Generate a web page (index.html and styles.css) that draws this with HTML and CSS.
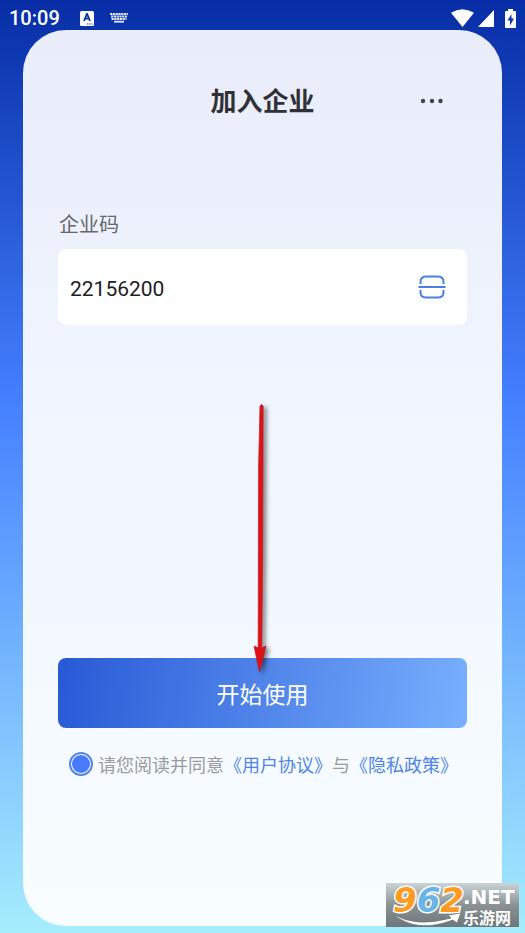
FILE: index.html
```html
<!DOCTYPE html>
<html lang="zh-CN">
<head>
<meta charset="utf-8">
<meta name="viewport" content="width=device-width, initial-scale=1">
<title>加入企业</title>
<link rel="stylesheet" href="styles.css">
</head>
<body>
<div class="status">
  <time class="clock">10:09</time>
  <svg class="ime" width="14" height="15" viewBox="0 0 14 15"><rect width="14" height="15" rx="1.5" fill="#fff"/><path d="M4 10 6.900 3h.2L10 10M5.200 7.700h3.600" fill="none" stroke="#0a34a8" stroke-width="1.8"/><path d="M7 13h1.400M9.300 13h1.200M11.400 13h1.200" stroke="#0a34a8" stroke-width="1.2"/></svg>
  <svg class="keyboard" width="18" height="10" viewBox="0 0 18 10"><path d="M0 1h18M1 3.500h16M1.500 6h15" fill="none" stroke="#e2e9ff" stroke-width="2" stroke-dasharray="2.200 .6"/><path d="M4 8.700h10" stroke="#e2e9ff" stroke-width="1.8"/></svg>
  <span class="signals">
    <svg width="23" height="18" viewBox="0 0 23 18"><path d="M0 3.700Q11.500-3.400 23 3.700L11.500 18Z" fill="#fff"/></svg>
    <svg width="16" height="17" viewBox="0 0 16 17"><path d="M16 0v17H0Z" fill="#fff"/></svg>
    <svg class="battery" width="11" height="19" viewBox="0 0 11 19"><path d="M3 0h5v2h2q1 0 1 1v15q0 1-1 1H1q-1 0-1-1V3q0-1 1-1h2Z" fill="#fff"/><path d="M6.500 5 2.500 11.500h2.500V16.500L9 9.500H6.500Z" fill="#0b36ae"/></svg>
  </span>
</div>
<main class="card">
  <header class="top">
    <h1>加入企业</h1>
    <button class="more" type="button" aria-label="更多"><svg width="24" height="6" viewBox="0 0 24 6" fill="#414448"><circle cx="3" cy="3" r="2.200"/><circle cx="12" cy="3" r="2.200"/><circle cx="20.500" cy="3" r="2.200"/></svg></button>
  </header>
  <form class="form">
    <label class="label" for="code">企业码</label>
    <div class="field">
      <input id="code" class="code" type="text" inputmode="numeric" value="22156200">
      <button class="scan" type="button" aria-label="扫码"><svg width="28" height="24" viewBox="0 0 28 24" fill="none" stroke="#4781e8" stroke-width="2"><path d="M2.500 9V7Q2.500 1.500 8 1.500h12Q25.500 1.500 25.500 7v2M2.500 15v2q0 5.500 5.500 5.500h12q5.500 0 5.500-5.500v-2M.5 12h27"/></svg></button>
    </div>
    <button class="start" type="button">开始使用</button>
    <div class="terms">
      <input id="agree" class="agree" type="radio" checked>
      <p><label for="agree">请您阅读并同意</label><a href="#terms">《用户协议》</a>与<a href="#privacy">《隐私政策》</a></p>
    </div>
  </form>
  <svg class="arrow" width="30" height="276" viewBox="0 0 30 276"><path d="M13 4Q14.500 1 16.200 4L15.700 155 14.800 246 19 244 12.500 270 7 244 11.200 246 11.600 65Z" fill="#e01116" stroke="#b91b20" stroke-width=".7"/></svg>
</main>
<div class="mark" aria-hidden="true">
  <span class="digits">9<b>6</b>2</span><span class="net">.NET</span><span class="site">乐游网</span>
  <svg class="swoosh" width="70" height="14" viewBox="0 0 70 14"><path d="M1 1Q24 15 59 5L56 2 69 0 65 10 61 7Q24 21 1 1Z" fill="#fff" stroke="#70777a" stroke-width=".8"/></svg>
</div>
</body>
</html>
```
FILE: styles.css
```css
* {
  box-sizing: border-box;
}

body {
  position: relative;
  display: flex;
  flex-direction: column;
  min-height: 100vh;
  margin: 0;
  background: linear-gradient(#062da6 0%, #4580ff 43%, #a5edfd 100%);
  font-family: Roboto, "Noto Sans CJK SC", sans-serif;
}

button {
  padding: 0;
  border: 0;
  background: none;
  font: inherit;
}

svg {
  display: block;
}

.status {
  display: flex;
  align-items: center;
  height: 30px;
  padding: 6px 9px 0;
  color: #fff;
}

.clock {
  font-size: 20px;
  font-weight: 500;
  line-height: 24px;
}

.ime {
  margin-left: 20px;
}

.keyboard {
  margin-left: 16px;
}

.signals {
  display: flex;
  align-items: center;
  gap: 4px;
  margin-left: auto;
}

.battery {
  margin-left: 7px;
}

.card {
  position: relative;
  display: flex;
  flex: 1;
  flex-direction: column;
  margin: 0 23px 7px;
  padding: 50px 35px 150px;
  border-radius: 43px;
  background: linear-gradient(#e9ecf9 0%, #f0f5ff 40%, #f8fdff 100%);
}

.top {
  display: grid;
  grid-template-columns: 1fr auto 1fr;
  align-items: center;
  height: 40px;
}

h1 {
  grid-column: 2;
  margin: 0;
  padding-top: 2px;
  color: #303136;
  font-size: 26px;
  font-weight: 700;
  line-height: 40px;
}

.more {
  justify-self: end;
  padding: 12px 23px 12px 12px;
}

.form {
  display: flex;
  flex: 1;
  flex-direction: column;
  margin-top: 89px;
}

.label {
  padding-left: 1px;
  color: #66686c;
  font-size: 20px;
  line-height: 32px;
}

.field {
  display: flex;
  align-items: center;
  height: 76px;
  margin-top: 8px;
  padding: 0 21px 0 12px;
  border-radius: 8px;
  background: #fff;
}

.code {
  flex: 1;
  min-width: 0;
  padding: 4px 0 0;
  border: 0;
  outline: 0;
  background: none;
  color: #202124;
  font: 21px/28px Roboto, sans-serif;
}

.start {
  height: 70px;
  margin-top: auto;
  border-radius: 8px;
  background: linear-gradient(100deg, #2859d6, #78b0fe);
  color: #fff;
  font-size: 23px;
}

.terms {
  display: flex;
  align-items: center;
  height: 24px;
  margin: 24px 0 0 11px;
  gap: 5px;
  color: #999b9e;
  font-size: 18px;
  line-height: 24px;
  white-space: nowrap;
}

.terms p {
  margin: 0;
  padding-top: 3px;
}

.terms a {
  color: #4f84e9;
  text-decoration: none;
}

.agree {
  flex: none;
  width: 24px;
  height: 24px;
  margin: 0;
  padding: 1px;
  border: 2px solid #5585ec;
  border-radius: 50%;
  appearance: none;
  background: #477bfa content-box;
}

.arrow {
  position: absolute;
  top: 372px;
  left: 50%;
  margin-left: -16px;
  filter: drop-shadow(3px 2px 2px rgb(0 0 0 / 50%));
  pointer-events: none;
}

.mark {
  position: absolute;
  right: 6px;
  bottom: 6px;
  width: 133px;
  height: 44px;
  background: linear-gradient(#cad4d6, #8a9294 50%, #6d7679);
  font-family: "DejaVu Sans", "Noto Sans CJK SC", sans-serif;
  font-weight: 700;
  white-space: nowrap;
}

.mark span,
.swoosh {
  position: absolute;
}

.digits {
  top: 1px;
  left: 7px;
  color: #ff9b20;
  font-size: 34px;
  font-style: italic;
  line-height: 32px;
  -webkit-text-stroke: 3px #fff;
  paint-order: stroke fill;
}

.digits b {
  color: #68b4e6;
}

.net {
  top: 4px;
  left: 77px;
  color: #fff;
  font-size: 20px;
  line-height: 20px;
}

.site {
  top: 26px;
  left: 77px;
  color: #fff;
  font-family: "Noto Sans CJK SC", sans-serif;
  font-size: 16px;
  line-height: 16px;
}

.swoosh {
  top: 30px;
  left: 6px;
}
```
